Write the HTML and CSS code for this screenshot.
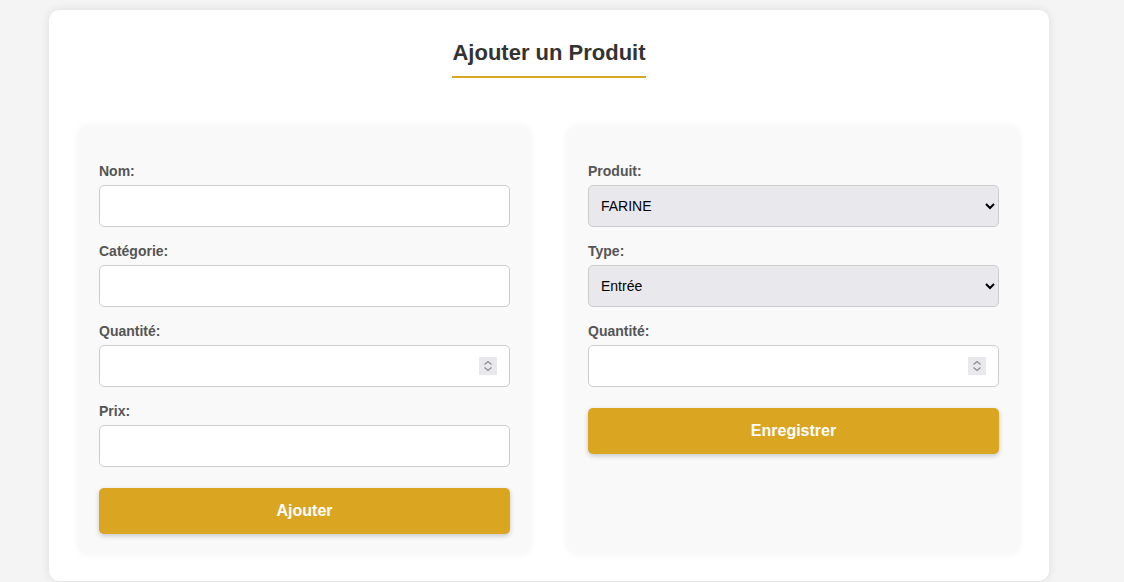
FILE: index.html
```html
<!DOCTYPE html>
<html lang="fr">
<head>
<meta charset="utf-8">
<title>Ajouter un Produit</title>
<link rel="stylesheet" href="styles.css">
</head>
<body>
<div class="container">
  <div class="title-wrap"><h2 class="title">Ajouter un Produit</h2></div>
  <div class="columns">
    <form class="card">
      <div class="group">
        <label class="label">Nom:</label>
        <input class="field" type="text">
      </div>
      <div class="group">
        <label class="label">Catégorie:</label>
        <input class="field" type="text">
      </div>
      <div class="group">
        <label class="label">Quantité:</label>
        <div class="num-wrap">
          <input class="field num" type="number">
          <span class="spin" aria-hidden="true">
            <svg width="18" height="18" viewBox="0 0 18 18"><path d="M5.5 7.5 L9 4.5 L12.5 7.5 M5.5 10.5 L9 13.5 L12.5 10.5" fill="none" stroke="#8a8a92" stroke-width="1.2"/></svg>
          </span>
        </div>
      </div>
      <div class="group">
        <label class="label">Prix:</label>
        <input class="field" type="text">
      </div>
      <button class="btn" type="button">Ajouter</button>
    </form>
    <form class="card">
      <div class="group">
        <label class="label">Produit:</label>
        <select class="field select"><option>FARINE</option></select>
      </div>
      <div class="group">
        <label class="label">Type:</label>
        <select class="field select"><option>Entrée</option><option>Sortie</option></select>
      </div>
      <div class="group">
        <label class="label">Quantité:</label>
        <div class="num-wrap">
          <input class="field num" type="number">
          <span class="spin" aria-hidden="true">
            <svg width="18" height="18" viewBox="0 0 18 18"><path d="M5.5 7.5 L9 4.5 L12.5 7.5 M5.5 10.5 L9 13.5 L12.5 10.5" fill="none" stroke="#8a8a92" stroke-width="1.2"/></svg>
          </span>
        </div>
      </div>
      <button class="btn" type="button">Enregistrer</button>
    </form>
  </div>
</div>
</body>
</html>
```

FILE: styles.css
```css
html, body {
  margin: 0;
  padding: 0;
}
body {
  background: #f4f4f4;
  font-family: "Liberation Sans", Arial, sans-serif;
  color: #333;
  height: 582px;
  overflow: hidden;
}
.container {
  width: 1000px;
  box-sizing: border-box;
  margin: 10px 0 0 49px;
  background: #fff;
  border-radius: 10px;
  box-shadow: 0 0 10px rgba(0, 0, 0, 0.1);
  padding: 30px 30px 28px;
  display: flex;
  flex-direction: column;
  gap: 49px;
}
.title-wrap {
  display: flex;
  justify-content: center;
}
.title {
  margin: 0;
  font-size: 22px;
  line-height: 25px;
  font-weight: bold;
  color: #333;
  padding-bottom: 11px;
  border-bottom: 2px solid #daa520;
}
.columns {
  display: grid;
  grid-template-columns: 1fr 1fr;
  gap: 38px;
}
.card {
  background: #f9f9f9;
  border-radius: 8px;
  box-shadow: 0 0 8px rgba(0, 0, 0, 0.06);
  padding: 36px 20px 19px;
  display: flex;
  flex-direction: column;
  margin: 0;
}
.group {
  display: flex;
  flex-direction: column;
  margin-bottom: 16px;
}
.label {
  font-size: 14px;
  line-height: 16px;
  font-weight: bold;
  color: #555;
  margin-bottom: 6px;
}
.field {
  height: 42px;
  box-sizing: border-box;
  border: 1px solid #ccc;
  border-radius: 5px;
  padding: 0 12px;
  font-family: "Liberation Sans", Arial, sans-serif;
  font-size: 14px;
  background: #fff;
  color: #000;
  width: 100%;
}
.select {
  background-color: #e9e8ed;
  padding-left: 8px;
}
.num-wrap {
  position: relative;
  display: flex;
}
.num::-webkit-inner-spin-button,
.num::-webkit-outer-spin-button {
  -webkit-appearance: none;
  margin: 0;
}
.spin {
  position: absolute;
  right: 13px;
  top: 12px;
  width: 18px;
  height: 18px;
  background: #e9e8ed;
  display: block;
  pointer-events: none;
}
.spin svg {
  display: block;
}
.btn {
  margin-top: 5px;
  height: 46px;
  border: none;
  border-radius: 5px;
  background: #daa520;
  color: #fff;
  font-family: "Liberation Sans", Arial, sans-serif;
  font-size: 16px;
  font-weight: bold;
  box-shadow: 0 2px 5px rgba(0, 0, 0, 0.2);
  cursor: pointer;
}
```
